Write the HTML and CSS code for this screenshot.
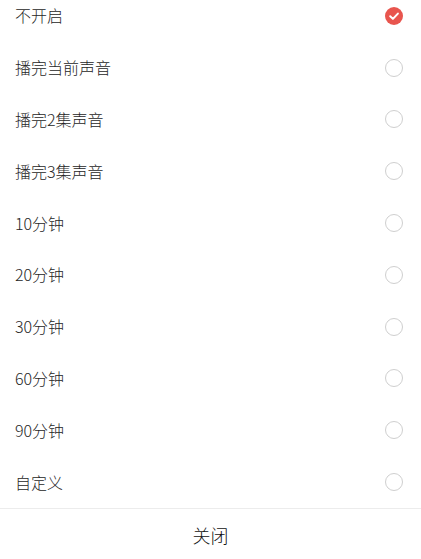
FILE: index.html
```html
<!DOCTYPE html>
<html lang="zh">
<head>
<meta charset="utf-8">
<link rel="stylesheet" href="styles.css">
</head>
<body>
<div class="sheet">
  <ul class="list">
    <li class="row"><span class="label">不开启</span><span class="radio checked"><svg viewBox="0 0 18 18" width="18" height="18"><circle cx="9" cy="9" r="9" fill="#e8554e"/><path d="M5.2 9.3 L7.9 11.9 L12.9 6.6" fill="none" stroke="#fff" stroke-width="2" stroke-linecap="round" stroke-linejoin="round"/></svg></span></li>
    <li class="row"><span class="label">播完当前声音</span><span class="radio"></span></li>
    <li class="row"><span class="label">播完2集声音</span><span class="radio"></span></li>
    <li class="row"><span class="label">播完3集声音</span><span class="radio"></span></li>
    <li class="row"><span class="label">10分钟</span><span class="radio"></span></li>
    <li class="row"><span class="label">20分钟</span><span class="radio"></span></li>
    <li class="row"><span class="label">30分钟</span><span class="radio"></span></li>
    <li class="row"><span class="label">60分钟</span><span class="radio"></span></li>
    <li class="row"><span class="label">90分钟</span><span class="radio"></span></li>
    <li class="row"><span class="label">自定义</span><span class="radio"></span></li>
  </ul>
  <div class="footer">关闭</div>
</div>
</body>
</html>
```
FILE: styles.css
```css
html, body {
  margin: 0;
  padding: 0;
  background: #fff;
  overflow: hidden;
}
body {
  font-family: "Noto Sans CJK SC", "Roboto", "Liberation Sans", sans-serif;
  color: #262626;
}
.sheet {
  width: 421px;
  height: 559px;
  display: flex;
  flex-direction: column;
  overflow: hidden;
}
.list {
  list-style: none;
  margin: -10px 0 0 0;
  padding: 0;
}
.row {
  height: 51.8px;
  display: flex;
  align-items: center;
  justify-content: space-between;
  padding: 0 18px 0 15px;
  box-sizing: border-box;
}
.label {
  font-size: 16px;
  line-height: 18px;
  font-weight: 300;
  margin-top: -1px;
}
.radio {
  width: 18px;
  height: 18px;
  box-sizing: border-box;
  border: 1.5px solid #cfcfcf;
  border-radius: 50%;
  display: flex;
}
.radio.checked {
  border: none;
}
.footer {
  border-top: 1px solid #ececec;
  height: 51px;
  display: flex;
  align-items: center;
  justify-content: center;
  font-size: 18px;
  font-weight: 300;
  color: #111;
  padding-top: 2px;
  box-sizing: border-box;
}
```
